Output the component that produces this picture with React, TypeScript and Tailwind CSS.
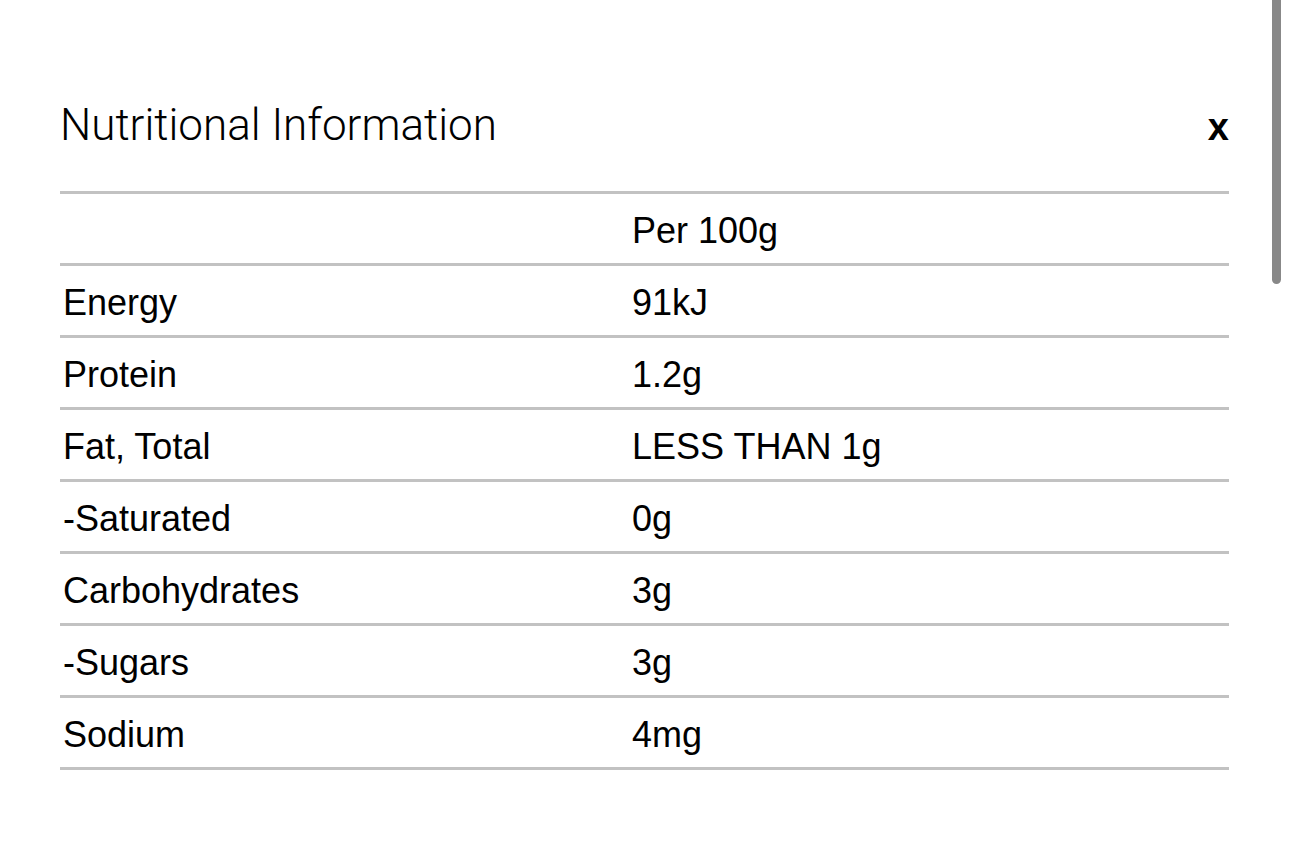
import React from "react";

const rows = [
  ["Energy", "91kJ"],
  ["Protein", "1.2g"],
  ["Fat, Total", "LESS THAN 1g"],
  ["-Saturated", "0g"],
  ["Carbohydrates", "3g"],
  ["-Sugars", "3g"],
  ["Sodium", "4mg"],
];

const App = () => {
  return (
    <div className="relative w-[1290px] h-[857px] bg-white overflow-hidden font-['Liberation_Sans',Arial,sans-serif] text-black">
      <div className="absolute right-[9px] top-0 w-[9px] h-[284px] rounded-b-full bg-[#888888]" />
      <div className="pl-[60px] pr-[61px] pt-[96px]">
        <div className="flex items-center justify-between h-[58px]">
          <h1 className="font-['Roboto',sans-serif] font-light text-[44px] leading-none">
            Nutritional Information
          </h1>
          <span className="text-[38px] font-bold leading-none mt-[3px]">x</span>
        </div>
        <div className="mt-[37px] border-t-[3px] border-[#c2c2c2]">
          <div className="flex items-center h-[72px] pt-[4px] border-b-[3px] border-[#c2c2c2] text-[36px]">
            <div className="w-[572px]" />
            <div>Per 100g</div>
          </div>
          {rows.map(([label, value]) => (
            <div
              key={label}
              className="flex items-center h-[72px] pt-[4px] border-b-[3px] border-[#c2c2c2] text-[36px]"
            >
              <div className="w-[572px] pl-[3px]">{label}</div>
              <div>{value}</div>
            </div>
          ))}
        </div>
      </div>
    </div>
  );
};

export default App;
